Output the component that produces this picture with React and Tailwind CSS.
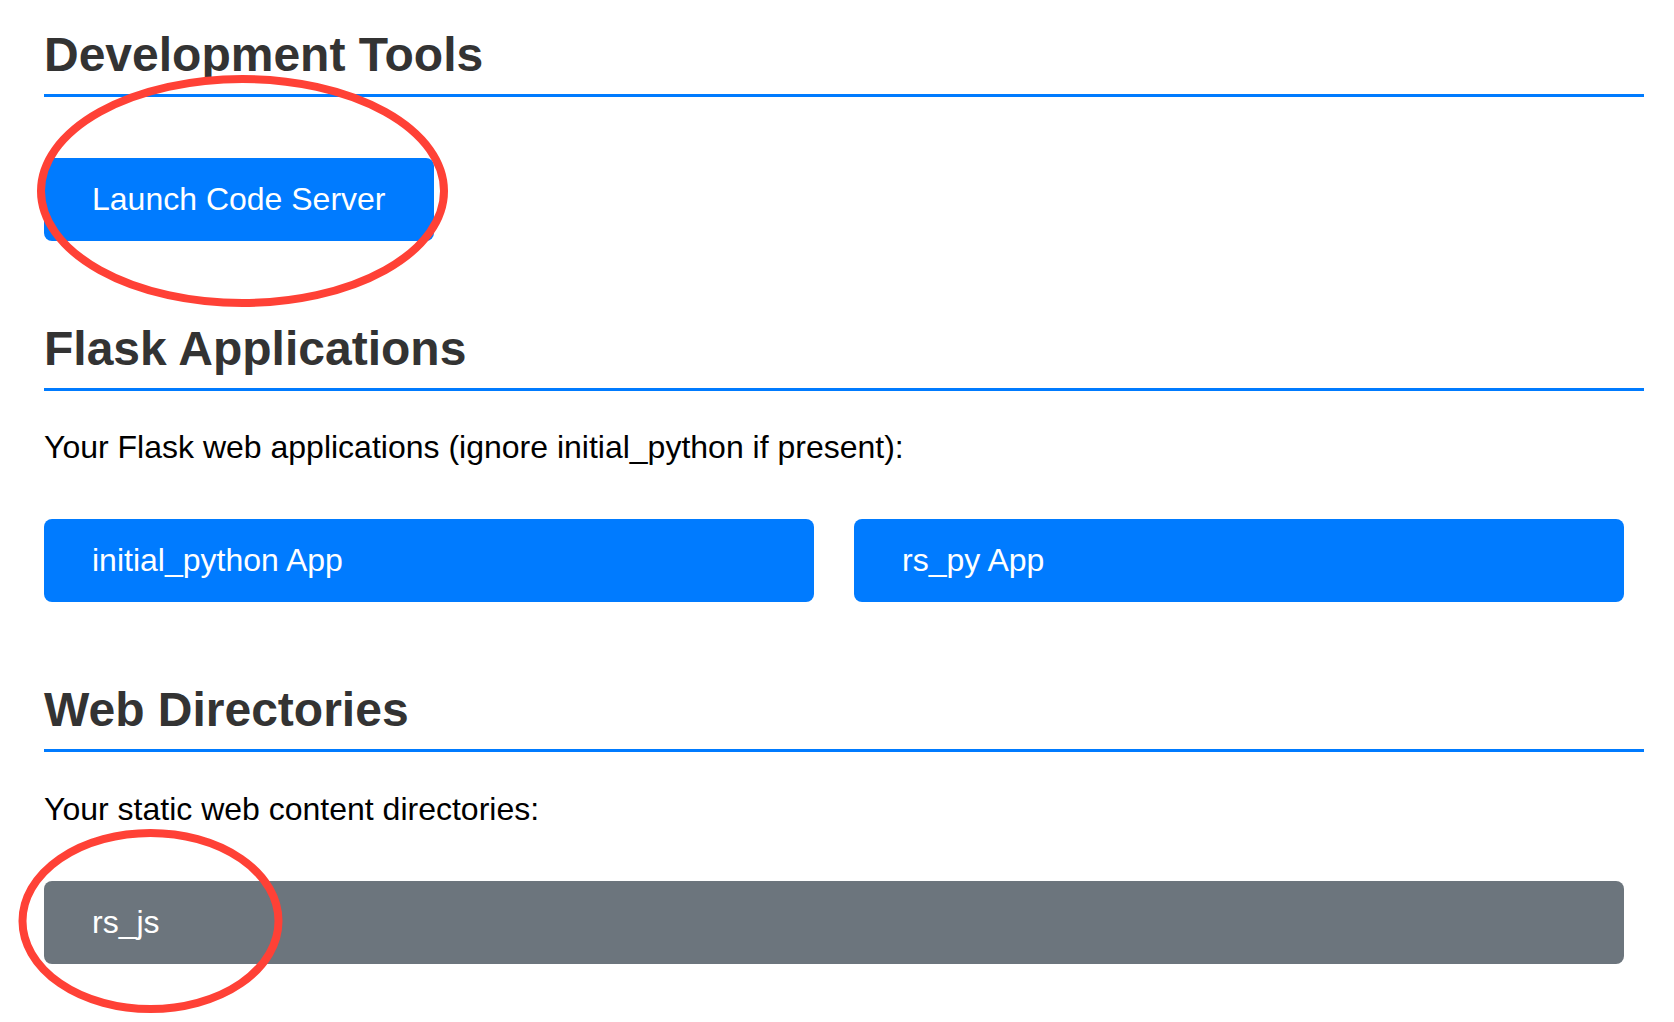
// Section heading with the blue rule underneath
const SectionTitle = ({ children, className = '' }) => (
  <h2
    className={`text-[48px] leading-[56px] font-bold text-[#333333] pb-[11px] border-b-[3px] border-[#007bff] ${className}`}
  >
    {children}
  </h2>
);

const LinkButton = ({ label, gray = false, className = '' }) => (
  <a
    href="#"
    className={`flex items-center h-[83px] px-[48px] rounded-[8px] text-white text-[32px] leading-[37px] ${
      gray ? 'bg-[#6c757d]' : 'bg-[#007bff]'
    } ${className}`}
  >
    {label}
  </a>
);

const App = () => {
  const flaskApps = ['initial_python App', 'rs_py App'];
  const webDirs = ['rs_js'];

  return (
    <div className="relative min-h-screen bg-white font-['Liberation_Sans',Arial,Helvetica,sans-serif]">
      <div className="pl-[44px] pt-[27px]">
        <div className="w-[1600px]">
          {/* Development Tools */}
          <SectionTitle>Development Tools</SectionTitle>
          <div className="mt-[61px] flex">
            <LinkButton label="Launch Code Server" />
          </div>

          {/* Flask Applications */}
          <SectionTitle className="mt-[80px]">Flask Applications</SectionTitle>
          <p className="mt-[38px] text-[32px] leading-[37px] text-black">
            Your Flask web applications (ignore initial_python if present):
          </p>
          <div className="mt-[53px] grid grid-cols-2 gap-x-[20px]">
            {flaskApps.map((name) => (
              <LinkButton key={name} label={name} className="mr-[20px]" />
            ))}
          </div>

          {/* Web Directories */}
          <SectionTitle className="mt-[80px]">Web Directories</SectionTitle>
          <p className="mt-[39px] text-[32px] leading-[37px] text-black">
            Your static web content directories:
          </p>
          <div className="mt-[53px] flex flex-col">
            {webDirs.map((name) => (
              <LinkButton key={name} label={name} gray className="mr-[20px]" />
            ))}
          </div>
        </div>
      </div>

      {/* red annotation marks drawn over the screenshot */}
      <svg
        className="absolute left-0 top-0 pointer-events-none"
        width="1674"
        height="1022"
        viewBox="0 0 1674 1022"
      >
        <ellipse cx="242.5" cy="191" rx="201.5" ry="112" fill="none" stroke="#ff4136" strokeWidth="8" />
        <ellipse cx="150.5" cy="921" rx="128" ry="88" fill="none" stroke="#ff4136" strokeWidth="8" />
      </svg>
    </div>
  );
};

export default App;
